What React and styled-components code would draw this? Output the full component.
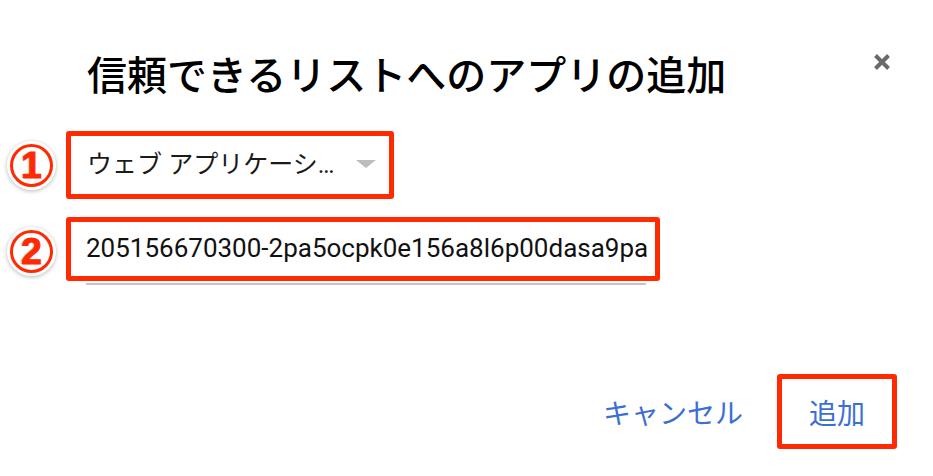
import React from "react";
import styled, { createGlobalStyle } from "styled-components";

const Global = createGlobalStyle`
  html, body { margin: 0; padding: 0; background: #fff; }
  body { font-family: "Noto Sans CJK JP", "Noto Sans", sans-serif; }
`;

const RED = "#ff2a00";
const BLUE = "#3c6fd6";

const Dialog = styled.div`
  width: 933px;
  height: 476px;
  display: flex;
  flex-direction: column;
  box-sizing: border-box;
`;

const Header = styled.div`
  display: flex;
  justify-content: space-between;
  align-items: flex-start;
  padding: 52px 41px 0 87px;
`;

const Title = styled.h1`
  margin: 0;
  font-size: 40px;
  line-height: 42px;
  font-weight: 500;
  color: #000;
  font-family: "Noto Sans CJK JP", sans-serif;
`;

const Close = styled.button`
  border: 0;
  background: none;
  padding: 0;
  margin-top: 0;
  width: 20px;
  height: 20px;
  display: flex;
  align-items: center;
  justify-content: center;
  cursor: pointer;
`;

const Form = styled.div`
  display: flex;
  flex-direction: column;
  gap: 18px;
  margin-top: 37px;
  padding-left: 10px;
`;

const Row = styled.div`
  display: flex;
  align-items: center;
  gap: 13px;
`;

const Badge = styled.span`
  width: 37px;
  height: 37px;
  border-radius: 50%;
  border: 3.5px solid ${RED};
  background: #fff;
  box-shadow: 0 0 0 3px #fff, 0 1px 4px 3px rgba(0, 0, 0, 0.28);
  display: flex;
  align-items: center;
  justify-content: center;
  color: ${RED};
  font-family: "Liberation Sans", Arial, sans-serif;
  font-weight: 700;
  font-size: 37px;
  line-height: 1;
  -webkit-text-stroke: 1px ${RED};
  text-shadow: -2px 0 0 #cfcfcf;
  flex: none;
`;

const Field = styled.div`
  display: flex;
  flex-direction: column;
`;

const Frame = styled.div`
  box-sizing: border-box;
  width: ${(p) => p.$w}px;
  height: ${(p) => p.$h}px;
  border: 5px solid ${RED};
  border-radius: 3px;
  display: flex;
  align-items: center;
  padding: 0 ${(p) => p.$pr || 0}px 0 ${(p) => p.$pl}px;
  background: #fff;
`;

const SelectText = styled.span`
  flex: 1;
  font-size: 25px;
  color: #1a1a1a;
  font-family: Roboto, "Noto Sans CJK JP", sans-serif;
  white-space: nowrap;
  margin-top: -6px;
`;

const Caret = styled.span`
  width: 0;
  height: 0;
  border-left: 10px solid transparent;
  border-right: 10px solid transparent;
  border-top: 8px solid #bdbdbd;
  margin-top: -3px;
`;

const IdText = styled.span`
  font-family: Roboto, sans-serif;
  font-size: 26px;
  color: #111;
  white-space: nowrap;
  margin-top: -2px;
`;

const Underline = styled.div`
  margin: 2px 0 0 20px;
  width: 560px;
  height: 2px;
  background: #c4c4c4;
`;

const Footer = styled.div`
  display: flex;
  justify-content: flex-end;
  align-items: center;
  gap: 34px;
  margin-top: 89px;
  padding-right: 36px;
`;

const TextButton = styled.button`
  border: 0;
  background: none;
  padding: 0;
  color: ${BLUE};
  font-family: "Noto Sans CJK JP", sans-serif;
  font-size: 28px;
  line-height: 1;
  cursor: pointer;
`;

const AddFrame = styled.div`
  box-sizing: border-box;
  width: 120px;
  height: 75px;
  border: 5px solid ${RED};
  border-radius: 3px;
  display: flex;
  align-items: center;
  justify-content: center;
`;

export default function App() {
  return (
    <>
      <Global />
      <Dialog>
        <Header>
          <Title>信頼できるリストへのアプリの追加</Title>
          <Close aria-label="閉じる">
            <svg width="20" height="20" viewBox="0 0 20 20">
              <path d="M3.5 3.5 L16.5 16.5 M16.5 3.5 L3.5 16.5" stroke="#6a6a6a" strokeWidth="4" strokeLinecap="butt" />
            </svg>
          </Close>
        </Header>
        <Form>
          <Row>
            <Badge>1</Badge>
            <Frame $w={328} $h={68} $pl={16} $pr={13}>
              <SelectText>ウェブ アプリケーシ…</SelectText>
              <Caret />
            </Frame>
          </Row>
          <Row>
            <Badge>2</Badge>
            <Field>
              <Frame $w={594} $h={64} $pl={15}>
                <IdText>205156670300-2pa5ocpk0e156a8l6p00dasa9pa</IdText>
              </Frame>
              <Underline />
            </Field>
          </Row>
        </Form>
        <Footer>
          <TextButton>キャンセル</TextButton>
          <AddFrame>
            <TextButton>追加</TextButton>
          </AddFrame>
        </Footer>
      </Dialog>
    </>
  );
}
